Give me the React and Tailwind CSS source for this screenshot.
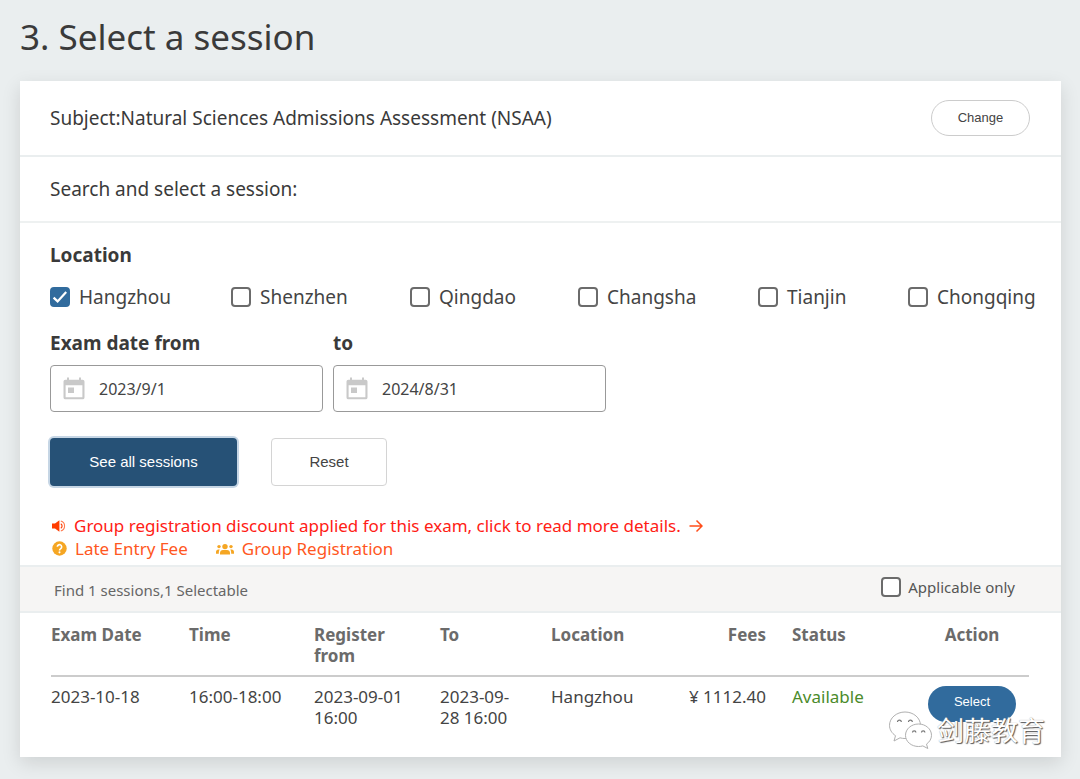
import { useState } from 'react'

const LOCATIONS = ['Hangzhou', 'Shenzhen', 'Qingdao', 'Changsha', 'Tianjin', 'Chongqing']

const SESSIONS = [
  {
    date: '2023-10-18',
    time: '16:00-18:00',
    from: '2023-09-01 16:00',
    to: '2023-09-28 16:00',
    location: 'Hangzhou',
    fee: '1112.40',
    status: 'Available',
  },
]

function Checkbox({ id, checked, onChange }) {
  return (
    <span className="grid w-5 h-5 shrink-0">
      <input
        id={id}
        type="checkbox"
        checked={checked}
        onChange={onChange}
        className="col-start-1 row-start-1 w-5 h-5 appearance-none rounded-[4px] border-2 border-[#6b6b6b] bg-white checked:border-[#316b9d] checked:bg-[#316b9d]"
      />
      {checked && (
        <svg viewBox="0 0 20 20" className="col-start-1 row-start-1 w-5 h-5 pointer-events-none" fill="none" stroke="white" strokeWidth="2.2">
          <path d="M3.6 10.6 7.6 14.4 16.2 5" />
        </svg>
      )}
    </span>
  )
}

function DateField({ id, label, value, onChange }) {
  return (
    <div className="flex flex-col w-[273px]">
      <label htmlFor={id} className="text-[19px] leading-7 font-bold text-[#3a3a3a]">{label}</label>
      <div className="mt-2 flex items-center h-[47px] rounded-[4px] border border-[#999] pl-3 gap-[14px]">
        <svg viewBox="0 0 22 24" className="w-[22px] h-6 shrink-0" fill="#c9c9c9">
          <path fillRule="evenodd" d="M4 0.5h2v2.2h10V0.5H18v2.2h1.6A1.9 1.9 0 0 1 21.5 4.6v15.8a1.9 1.9 0 0 1-1.9 1.9H2.4A1.9 1.9 0 0 1 .5 20.4V4.6A1.9 1.9 0 0 1 2.4 2.7H4ZM2.6 8.2V20.2h16.8V8.2Z" />
          <path d="M5 10.5h6v5.5H5z" />
        </svg>
        <input
          id={id}
          type="text"
          value={value}
          onChange={(e) => onChange(e.target.value)}
          className="min-w-0 flex-1 text-base text-[#444] outline-none"
        />
      </div>
    </div>
  )
}

function SoundIcon() {
  return (
    <svg viewBox="0 0 14 12" className="w-[14px] h-3 shrink-0" fill="#ff3d00">
      <path d="M0 3.6h3L7.4 0.2v11.6L3 8.4H0z" />
      <path d="M8.8 3.7a2.7 2.7 0 0 1 0 4.6" fill="none" stroke="#ff3d00" strokeWidth="1.2" />
      <path d="M8.8 1a5.2 5.2 0 0 1 0 10" fill="none" stroke="#ff7a4d" strokeWidth="1.1" />
    </svg>
  )
}

function HelpIcon() {
  return (
    <svg viewBox="0 0 16 16" className="w-[15px] h-[15px] shrink-0">
      <circle cx="8" cy="8" r="7.7" fill="#f5a623" />
      <path d="M5.7 6.2a2.3 2.3 0 1 1 3.6 1.9C8.4 8.7 8 9 8 10" fill="none" stroke="white" strokeWidth="1.7" />
      <circle cx="8" cy="12.1" r="1.1" fill="white" />
    </svg>
  )
}

function GroupIcon() {
  return (
    <svg viewBox="0 0 18 12" className="w-[18px] h-3 shrink-0" fill="#f5a623">
      <circle cx="9" cy="3.6" r="2.7" />
      <path d="M4 11.6V10c0-2 1.3-3 3-3h4c1.7 0 3 1 3 3v1.6z" />
      <circle cx="3" cy="3.6" r="1.7" />
      <circle cx="15" cy="3.6" r="1.7" />
      <path d="M0 10.8V9c0-1.6 1-2.5 2.3-2.5h1.5C3 7.5 2.8 8.6 2.8 10.8zM18 10.8V9c0-1.6-1-2.5-2.3-2.5h-1.5c.8 1 1 2.1 1 4.3z" />
    </svg>
  )
}

function Watermark() {
  return (
    <div className="absolute right-4 bottom-[7px] flex items-center gap-1 pointer-events-none">
      <svg viewBox="0 0 46 40" className="w-[46px] h-10" fill="white" stroke="#b0b0b0" strokeWidth="1">
        <path d="M18 2C9.5 2 2.5 8 2.5 15.3c0 4.2 2.3 7.9 6 10.4L7 31l6-3.2c1.6.5 3.3.7 5 .7 8.600 0 15.5-5.9 15.5-13.2S26.6 2 18 2Z" />
        <path d="M31.5 14c-7.2 0-13 5-13 11.3s5.8 11.2 13 11.2c1.5 0 3-.2 4.3-.6l5 2.6-1.3-4.4c3-2.1 5-5.2 5-8.8C44.5 19 38.7 14 31.5 14Z" />
        <path d="M10.5 12a1.9 1.9 0 0 1 3.8 0M21.5 12a1.9 1.9 0 0 1 3.8 0M25.5 22.5a1.7 1.7 0 0 1 3.4 0M34.5 22.5a1.7 1.7 0 0 1 3.4 0" fill="none" stroke="#777" strokeWidth="1.2" />
      </svg>
      <span className="text-[27px] leading-7 text-white [text-shadow:1px_1px_1px_#555,0_0_1px_#999] font-['Noto_Sans_CJK_SC',sans-serif]">
        剑藤教育
      </span>
    </div>
  )
}

export default function App() {
  const [selected, setSelected] = useState(['Hangzhou'])
  const [from, setFrom] = useState('2023/9/1')
  const [to, setTo] = useState('2024/8/31')
  const [applicable, setApplicable] = useState(false)

  const toggle = (name) =>
    setSelected((prev) => (prev.includes(name) ? prev.filter((n) => n !== name) : [...prev, name]))

  return (
    <main className="min-h-screen bg-[#eaeeef] pl-5 pr-[19px] pt-3 pb-[22px] text-[#3a3a3a] font-['Noto_Sans','Noto_Sans_CJK_SC',sans-serif]">
      <h1 className="text-[35px] leading-[49px] mb-5">3. Select a session</h1>

      <div className="relative bg-white shadow-[0_6px_18px_rgba(0,0,0,0.12)]">
        <div className="flex items-center justify-between h-[76px] pl-[30px] pr-[31px] border-b-2 border-[#eaeeef]">
          <p className="text-[19px]">Subject:Natural Sciences Admissions Assessment (NSAA)</p>
          <button className="w-[99px] h-9 rounded-full border border-[#ccc] text-[13px] text-[#444] font-['Liberation_Sans',sans-serif]">Change</button>
        </div>
        <div className="flex items-center h-[66px] px-[30px] border-b-2 border-[#eef1f1]">
          <p className="text-[19px]">Search and select a session:</p>
        </div>

        <form className="pl-[30px] pt-[18px]" onSubmit={(e) => e.preventDefault()}>
          <fieldset>
            <legend className="text-[19px] leading-7 font-bold">Location</legend>
            <div className="mt-3 grid grid-cols-[181px_179px_168px_180px_150px_auto]">
              {LOCATIONS.map((name) => (
                <div key={name} className="flex items-center gap-[9px] h-8">
                  <Checkbox id={name} checked={selected.includes(name)} onChange={() => toggle(name)} />
                  <label htmlFor={name} className="text-[19px] text-[#444]">{name}</label>
                </div>
              ))}
            </div>
          </fieldset>

          <div className="mt-4 flex gap-[10px]">
            <DateField id="from" label="Exam date from" value={from} onChange={setFrom} />
            <DateField id="to" label="to" value={to} onChange={setTo} />
          </div>

          <div className="mt-[26px] flex gap-[34px] text-[15px] font-['Liberation_Sans',sans-serif]">
            <button className="w-[187px] h-12 rounded-[4px] bg-[#265176] text-white shadow-[0_0_0_2px_#c6d6e5]">See all sessions</button>
            <button type="reset" className="w-[116px] h-12 rounded-[4px] border border-[#d4d4d4] text-[#444]">Reset</button>
          </div>
        </form>

        <div className="mt-7 pl-8 pb-[5px] text-[17px] leading-[23px]">
          <a href="#discount" className="flex items-center gap-2 text-[#ff2015]">
            <SoundIcon />
            <span>Group registration discount applied for this exam, click to read more details.</span>
            <svg viewBox="0 0 14 14" className="w-[14px] h-[14px]" fill="none" stroke="#ff4d1a" strokeWidth="1.5">
              <path d="M0.5 7h12M7.5 1.5 13 7l-5.5 5.5" />
            </svg>
          </a>
          <div className="flex gap-7 text-[#ff5722]">
            <a href="#late" className="flex items-center gap-2">
              <HelpIcon />
              Late Entry Fee
            </a>
            <a href="#group" className="flex items-center gap-2">
              <GroupIcon />
              Group Registration
            </a>
          </div>
        </div>

        <div className="flex items-center justify-between h-12 pl-[34px] pr-[46px] border-y-2 border-[#eaeeef] bg-[#f6f5f4] text-[15px]">
          <p className="pt-[3px] text-[#666]">Find 1 sessions,1 Selectable</p>
          <div className="flex items-center gap-[7px] pb-1">
            <Checkbox id="applicable" checked={applicable} onChange={() => setApplicable(!applicable)} />
            <label htmlFor="applicable" className="text-[#555]">Applicable only</label>
          </div>
        </div>

        <div className="pl-[31px] pr-8 pt-[2px] pb-[29px]">
          <table className="w-full table-fixed text-[17px] leading-[21px]">
            <colgroup>
              <col className="w-[138px]" />
              <col className="w-[125px]" />
              <col className="w-[126px]" />
              <col className="w-[111px]" />
              <col className="w-[105px]" />
              <col className="w-[110px]" />
              <col className="w-[149px]" />
              <col />
            </colgroup>
            <thead>
              <tr className="border-b-2 border-[#ccc] text-left align-top text-[#6b6b6b] [&>th]:font-bold [&>th]:py-[9px]">
                <th>Exam Date</th>
                <th>Time</th>
                <th className="pr-6">Register from</th>
                <th>To</th>
                <th>Location</th>
                <th className="text-right">Fees</th>
                <th className="pl-[26px]">Status</th>
                <th className="text-center">Action</th>
              </tr>
            </thead>
            <tbody>
              {SESSIONS.map((s) => (
                <tr key={s.date} className="align-top [&>td]:pt-[9px] text-[#444]">
                  <td>{s.date}</td>
                  <td>{s.time}</td>
                  <td className="pr-6">{s.from}</td>
                  <td className="pr-7">{s.to}</td>
                  <td>{s.location}</td>
                  <td className="text-right">¥ {s.fee}</td>
                  <td className="pl-[26px] text-[#4b8b2b]">{s.status}</td>
                  <td className="text-center">
                    <button className="w-[88px] h-9 pb-1 rounded-full bg-[#316b9d] text-[13px] leading-4 text-white font-['Liberation_Sans',sans-serif]">Select</button>
                  </td>
                </tr>
              ))}
            </tbody>
          </table>
        </div>

        <Watermark />
      </div>
    </main>
  )
}
